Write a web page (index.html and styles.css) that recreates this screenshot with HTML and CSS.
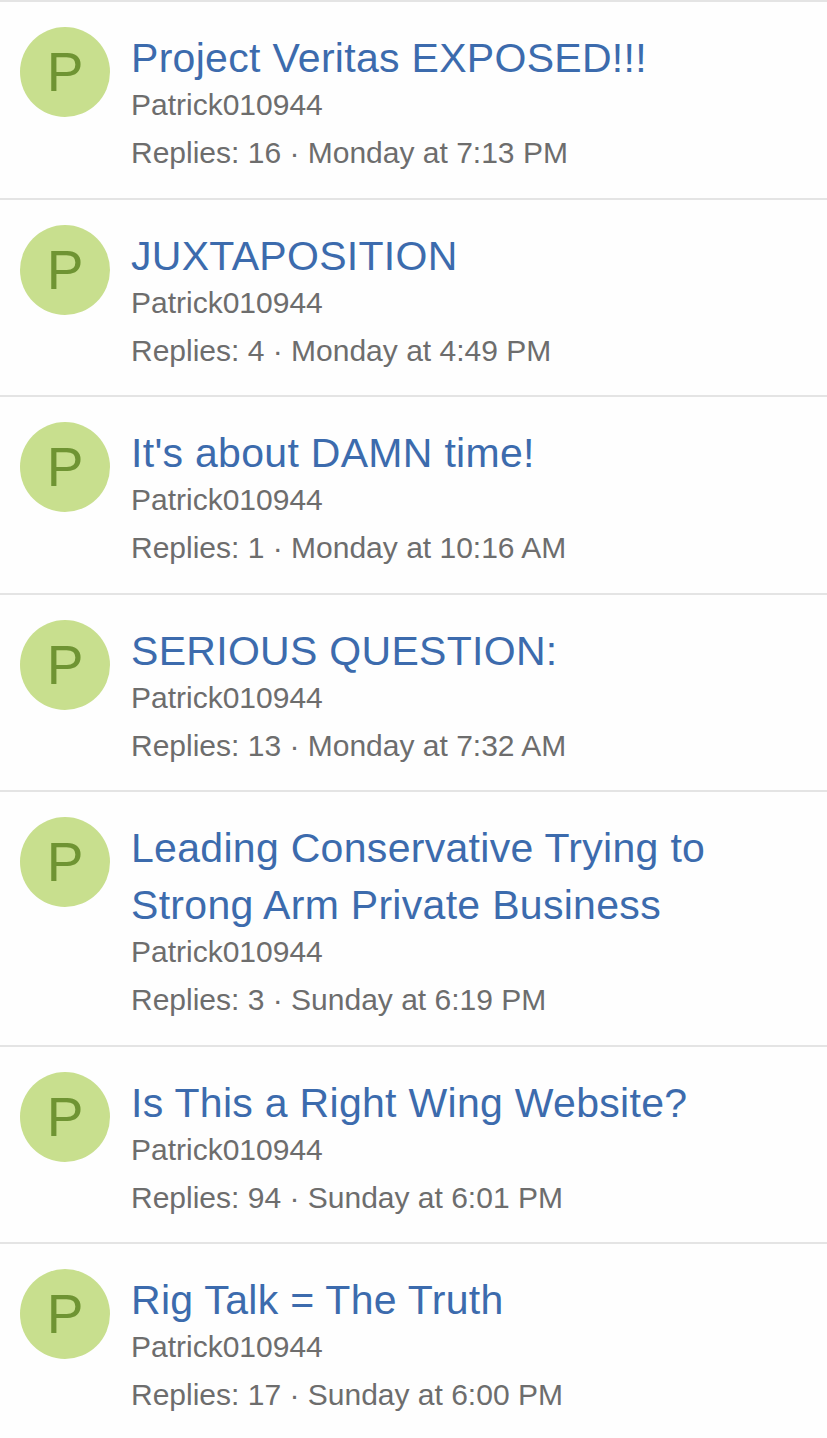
FILE: index.html
```html
<!DOCTYPE html>
<html lang="en">
<head>
    <meta charset="UTF-8">
    <meta name="viewport" content="width=device-width, initial-scale=1.0">
    <title>Threads by Patrick010944</title>
    <link rel="stylesheet" href="styles.css">
</head>
<body>
    <ul class="thread-list">
        <li class="thread">
            <span class="avatar">P</span>
            <div class="thread-main">
                <a class="thread-title" href="#">Project Veritas EXPOSED!!!</a>
                <div class="thread-user">Patrick010944</div>
                <div class="thread-meta">Replies: 16 · Monday at 7:13 PM</div>
            </div>
        </li>
        <li class="thread">
            <span class="avatar">P</span>
            <div class="thread-main">
                <a class="thread-title" href="#">JUXTAPOSITION</a>
                <div class="thread-user">Patrick010944</div>
                <div class="thread-meta">Replies: 4 · Monday at 4:49 PM</div>
            </div>
        </li>
        <li class="thread">
            <span class="avatar">P</span>
            <div class="thread-main">
                <a class="thread-title" href="#">It's about DAMN time!</a>
                <div class="thread-user">Patrick010944</div>
                <div class="thread-meta">Replies: 1 · Monday at 10:16 AM</div>
            </div>
        </li>
        <li class="thread">
            <span class="avatar">P</span>
            <div class="thread-main">
                <a class="thread-title" href="#">SERIOUS QUESTION:</a>
                <div class="thread-user">Patrick010944</div>
                <div class="thread-meta">Replies: 13 · Monday at 7:32 AM</div>
            </div>
        </li>
        <li class="thread">
            <span class="avatar">P</span>
            <div class="thread-main">
                <a class="thread-title" href="#">Leading Conservative Trying to Strong Arm Private Business</a>
                <div class="thread-user">Patrick010944</div>
                <div class="thread-meta">Replies: 3 · Sunday at 6:19 PM</div>
            </div>
        </li>
        <li class="thread">
            <span class="avatar">P</span>
            <div class="thread-main">
                <a class="thread-title" href="#">Is This a Right Wing Website?</a>
                <div class="thread-user">Patrick010944</div>
                <div class="thread-meta">Replies: 94 · Sunday at 6:01 PM</div>
            </div>
        </li>
        <li class="thread">
            <span class="avatar">P</span>
            <div class="thread-main">
                <a class="thread-title" href="#">Rig Talk = The Truth</a>
                <div class="thread-user">Patrick010944</div>
                <div class="thread-meta">Replies: 17 · Sunday at 6:00 PM</div>
            </div>
        </li>
    </ul>
</body>
</html>
```

FILE: styles.css
```css
body {
    margin: 0;
    background-color: #fefefe;
    font-family: "Liberation Sans", Arial, Helvetica, sans-serif;
}
.thread-list {
    list-style: none;
    margin: 0;
    padding: 0;
}
.thread {
    display: flex;
    align-items: flex-start;
    gap: 21px;
    padding: 25px 20px 27.5px 20px;
    border-top: 2px solid #e4e4e4;
}
.avatar {
    flex: none;
    width: 90px;
    height: 90px;
    border-radius: 50%;
    background-color: #c8df8e;
    color: #6f9433;
    font-size: 55px;
    line-height: 90px;
    text-align: center;
}
.thread-main {
    padding-top: 3px;
    min-width: 0;
}
.thread-title {
    display: block;
    font-size: 41px;
    line-height: 57px;
    letter-spacing: 0.3px;
    color: #3c6bad;
    text-decoration: none;
}
.thread-user, .thread-meta {
    font-size: 30px;
    line-height: 35px;
    color: #6d6d6d;
}
.thread-meta {
    margin-top: 13px;
}
```
